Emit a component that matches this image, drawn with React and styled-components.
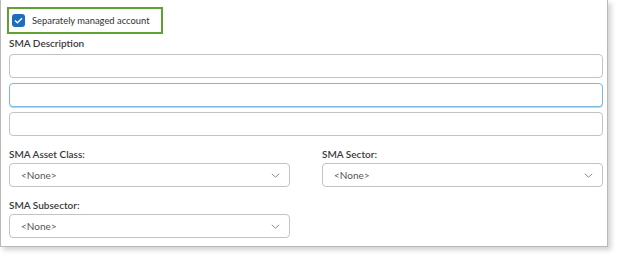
import React from "react";
import styled, { createGlobalStyle } from "styled-components";

const Global = createGlobalStyle`
  html, body { margin: 0; padding: 0; background: #fff; }
  body { font-family: Lato, "Open Sans", Arial, sans-serif; color: #333; }
  * { box-sizing: border-box; }
`;

const Page = styled.div`
  width: 617px;
  height: 256px;
  background: #fff;
  padding: 0;
`;

const Panel = styled.div`
  width: 608px;
  border: 1px solid #b9b9b9;
  border-top: none;
  background: #fff;
  box-shadow: 3px 3px 5px rgba(0, 0, 0, 0.18);
  padding: 7px 4px 8px 8px;
`;

const CheckRow = styled.label`
  display: flex;
  align-items: center;
  gap: 7px;
  width: 156px;
  height: 27px;
  margin-left: -2px;
  padding-left: 3px;
  border: 2px solid #5ea331;
  font-size: 9.4px;
  white-space: nowrap;
  color: #333;
`;

const Box = styled.span`
  flex: none;
  width: 13px;
  height: 13px;
  border-radius: 3px;
  background: #1d6fbd;
  display: flex;
  align-items: center;
  justify-content: center;
`;

const Label = styled.div`
  font-size: 10px;
  line-height: 14px;
  font-weight: 600;
  color: #3a3a3a;
  margin-top: ${(p) => p.$mt || 0}px;
  margin-bottom: ${(p) => p.$mb || 2}px;
`;

const Stack = styled.div`
  display: flex;
  flex-direction: column;
  gap: 5px;
`;

const Input = styled.div`
  height: 24px;
  border: 1px solid ${(p) => (p.$focus ? "#7db7df" : "#c3c3c3")};
  border-radius: 4px;
  background: #fff;
  box-shadow: ${(p) => (p.$focus ? "0 1px 0 #b9d9ef" : "none")};
`;

const Grid = styled.div`
  display: grid;
  grid-template-columns: 1fr 1fr;
  column-gap: 32px;
  margin-top: 11px;
`;

const Field = styled.div`
  display: flex;
  flex-direction: column;
  margin-top: ${(p) => p.$mt || 0}px;
`;

const Select = styled.div`
  height: 24px;
  border: 1px solid #c3c3c3;
  border-radius: 4px;
  display: flex;
  align-items: center;
  justify-content: space-between;
  padding: 0 9px 0 11px;
  font-size: 10px;
  color: #555;
`;

const Chevron = () => (
  <svg width="9" height="5" viewBox="0 0 9 5">
    <path d="M0.8 0.8 L4.5 4.2 L8.2 0.8" fill="none" stroke="#8a8a8a" strokeWidth="1" />
  </svg>
);

const SelectField = ({ label, mt }) => (
  <Field $mt={mt}>
    <Label>{label}</Label>
    <Select>
      <span>&lt;None&gt;</span>
      <Chevron />
    </Select>
  </Field>
);

export default function App() {
  return (
    <Page>
      <Global />
      <Panel>
        <CheckRow>
          <Box>
            <svg width="9" height="7" viewBox="0 0 9 7">
              <path d="M1 3.5 L3.4 5.8 L8 1.2" fill="none" stroke="#fff" strokeWidth="1.4" />
            </svg>
          </Box>
          Separately managed account
        </CheckRow>
        <Label $mt={2} $mb={4}>SMA Description</Label>
        <Stack>
          <Input />
          <Input $focus />
          <Input />
        </Stack>
        <Grid>
          <SelectField label="SMA Asset Class:" />
          <SelectField label="SMA Sector:" />
          <SelectField label="SMA Subsector:" mt={11} />
        </Grid>
      </Panel>
    </Page>
  );
}
